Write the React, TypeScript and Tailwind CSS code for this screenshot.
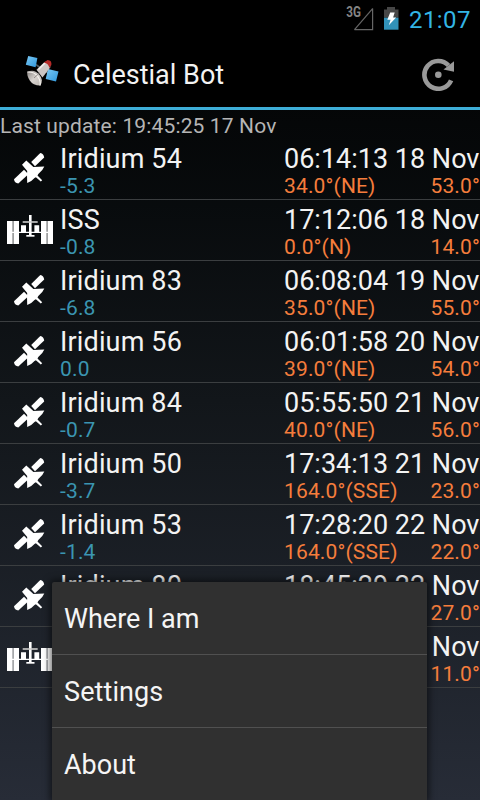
type Pass = {
  name: string;
  magnitude: string;
  time: string;
  azimuth: string;
  altitude: string;
};

const passes: Pass[] = [
  { name: "Iridium 54", magnitude: "-5.3", time: "06:14:13 18 Nov", azimuth: "34.0°(NE)", altitude: "53.0°" },
  { name: "ISS", magnitude: "-0.8", time: "17:12:06 18 Nov", azimuth: "0.0°(N)", altitude: "14.0°" },
  { name: "Iridium 83", magnitude: "-6.8", time: "06:08:04 19 Nov", azimuth: "35.0°(NE)", altitude: "55.0°" },
  { name: "Iridium 56", magnitude: "0.0", time: "06:01:58 20 Nov", azimuth: "39.0°(NE)", altitude: "54.0°" },
  { name: "Iridium 84", magnitude: "-0.7", time: "05:55:50 21 Nov", azimuth: "40.0°(NE)", altitude: "56.0°" },
  { name: "Iridium 50", magnitude: "-3.7", time: "17:34:13 21 Nov", azimuth: "164.0°(SSE)", altitude: "23.0°" },
  { name: "Iridium 53", magnitude: "-1.4", time: "17:28:20 22 Nov", azimuth: "164.0°(SSE)", altitude: "22.0°" },
  { name: "Iridium 80", magnitude: "", time: "18:45:29 22 Nov", azimuth: "", altitude: "27.0°" },
  { name: "ISS", magnitude: "", time: "17:02:11 23 Nov", azimuth: "", altitude: "11.0°" },
];

function IridiumIcon() {
  return (
    <svg className="h-[60px] w-[60px] shrink-0" viewBox="0 -6 60 60" fill="#fff">
      <path d="M31.2 16.9 40.3 8Q43.8 8.8 44.2 12.6L35 21.3Z" />
      <path d="M14 34.3 24 24.8 28.4 29.2 18.3 38.6Q14.5 38 14 34.3Z" />
      <path d="M22 19.8 26.3 15.4 33.4 21.9 44.3 21.6Q42.8 25.7 38.3 29L37.5 30.6 42.2 35.2 40.8 36.6 35.9 32.2 34.5 32.9Q31.5 36.5 27.2 38L27 29.5 27.2 26Z" />
    </svg>
  );
}

function StationIcon() {
  return (
    <svg className="h-[60px] w-[60px] shrink-0" viewBox="0 0 60 60" fill="#fff">
      <path d="M7 21h5.7v23H7zM13.4 21h5.6v23h-5.6zM41 21h5.7v23H41zM47.4 21H53v23h-5.6z" />
      <path d="M21 25.3h5v7.5h-5zM34.4 25.3h4.8v7.5h-4.8z" />
      <path d="M8 31.8h44v1.3H8z" />
      <path d="M29 15h2.6v20.5H29z" />
      <path d="M22.7 21.2h15v1.6h-15z" fill="#ccc" />
      <path d="M26.3 35h8.2v1.7h-8.2z" />
    </svg>
  );
}

function AppLogo() {
  return (
    <svg className="h-9 w-9" viewBox="0 -2 36 36">
      <defs>
        <linearGradient id="panel" x1="0" y1="0" x2="1" y2="1">
          <stop stopColor="#7cc9f4" />
          <stop offset="1" stopColor="#2f97dc" />
        </linearGradient>
        <linearGradient id="dish" x1="0" y1="0" x2="1" y2="1">
          <stop stopColor="#888380" />
          <stop offset=".5" stopColor="#d8d3cf" />
          <stop offset="1" stopColor="#b8b2ad" />
        </linearGradient>
      </defs>
      <path d="M11 7 27 18" stroke="#4e5960" strokeWidth="1.6" />
      <path d="M4.2 -1 13.4 1 11.6 10.3 1.8 7.8Z" fill="url(#panel)" />
      <path d="M24 12 34.5 14.6 32 24.6 21.7 21.9Z" fill="url(#panel)" />
      <path d="M12.5 12.8 20.5 5Q27 3.5 26.2 10.5L18.5 20.5Z" fill="#cbc5c3" />
      <path d="M14.5 12.5 21 6" stroke="#f2efee" strokeWidth="1.4" />
      <path d="M19.8 5.5 23.6 3Q28 3.2 27.4 8L25.4 11Q24.5 6.3 19.8 5.5Z" fill="#b52a28" />
      <path d="M3.3 15Q10 11.5 15.2 17.5T16 28.6Q9 28.5 5.8 23.5T3.3 15Z" fill="url(#dish)" />
      <path d="M3.3 15Q10.5 14.5 13.8 19.5T16 28.6" fill="none" stroke="#f8f5f1" strokeWidth="1.1" />
      <path d="M10 21 15.5 16" stroke="#8b8581" strokeWidth=".9" />
    </svg>
  );
}

function StatusBar() {
  return (
    <div className="flex h-[38px] shrink-0 items-center bg-black pl-[346px]">
      <svg className="h-[38px] w-[56px] shrink-0" viewBox="0 0 56 38">
        <text x="0.3" y="17.3" className="text-[14px] font-bold" fill="#858585" textLength="14.7" lengthAdjust="spacingAndGlyphs">3G</text>
        <path d="M8.5 29.6H26.6V8.6" fill="none" stroke="#666" strokeWidth="1.2" />
        <path d="M8.5 29.6 26.6 8.6" stroke="#666" strokeWidth="1.2" />
        <path d="M38 9.5h3V7h8v2.5h3.5v8.2H38z" fill="#474747" />
        <path d="M38 17.7h14.5v12H38z" fill="#3192b9" />
        <path d="M44.2 12.5h4.5l-1.6 5h3l-7.3 7.8 1.8-5.6h-3.3z" fill="#fff" />
      </svg>
      <span className="ml-[7px] whitespace-nowrap pt-[2px] text-[24px] leading-[36px] tracking-[0.4px] text-[#33b5e5]">21:07</span>
    </div>
  );
}

function ActionBar() {
  return (
    <header className="flex h-[69px] shrink-0 items-center bg-black pr-[23px] pl-[24px]">
      <AppLogo />
      <h1 className="ml-[13px] flex-1 pt-[5px] text-[27px] leading-[32px] text-[#f3f3f3]">Celestial Bot</h1>
      <button aria-label="Refresh" className="h-9 w-9">
        <svg className="h-9 w-9" viewBox="0 0 36 36">
          <path d="M30.1 25.3A13.9 13.9 0 1 1 27.6 10.5" fill="none" stroke="#999" strokeWidth="4.6" />
          <path d="M33 6.2V16.7L22.5 14.6Z" fill="#999" />
          <circle cx="17.3" cy="19.8" r="3.3" fill="#999" />
        </svg>
      </button>
    </header>
  );
}

function PassRow({ pass }: { pass: Pass }) {
  return (
    <li className="flex h-[61px] border-b border-[#3b3e40]">
      {pass.name === "ISS" ? <StationIcon /> : <IridiumIcon />}
      <div className="w-[224px] pt-[6px]">
        <div className="text-[27px] leading-[28px] tracking-[0.15px] text-[#f3f3f3]">{pass.name}</div>
        <div className="text-[21px] leading-[27px] tracking-[0.15px] text-[#3b95b1]">{pass.magnitude}</div>
      </div>
      <div className="w-[196px] pt-[6px]">
        <div className="whitespace-nowrap text-[27px] leading-[28px] text-[#f3f3f3]">{pass.time}</div>
        <div className="flex justify-between text-[21px] leading-[27px] tracking-[0.15px] text-[#f57d3c]">
          <span>{pass.azimuth}</span>
          <span>{pass.altitude}</span>
        </div>
      </div>
    </li>
  );
}

function OptionsMenu() {
  return (
    <nav className="absolute top-[582px] left-[52px] h-[218px] w-[375px] rounded-t-[2px] bg-[#303030] text-[27px] text-[#f5f5f5] shadow-[0_0_7px_2px_rgba(0,0,0,0.55)]">
      <div className="flex h-[73px] items-center border-b border-[#505050] pt-[3px] pl-[12px]">Where I am</div>
      <div className="flex h-[73px] items-center border-b border-[#505050] pt-[3px] pl-[12px] tracking-[0.1px]">Settings</div>
      <div className="flex h-[72px] items-center pt-[3px] pl-[12px]">About</div>
    </nav>
  );
}

export default function App() {
  return (
    <div className="relative flex h-[800px] w-[480px] flex-col overflow-hidden bg-linear-to-b from-[#020303] via-[#12161a] to-[#272c37] font-['Roboto',sans-serif]">
      <StatusBar />
      <ActionBar />
      <main className="border-t-[3px] border-[#3eaed8]">
        <p className="h-[29px] text-[21px] leading-[32px] tracking-[0.14px] text-[#b5b5b5]">Last update: 19:45:25 17 Nov</p>
        <ul>
          {passes.map((pass) => (
            <PassRow key={pass.time} pass={pass} />
          ))}
        </ul>
      </main>
      <OptionsMenu />
    </div>
  );
}
